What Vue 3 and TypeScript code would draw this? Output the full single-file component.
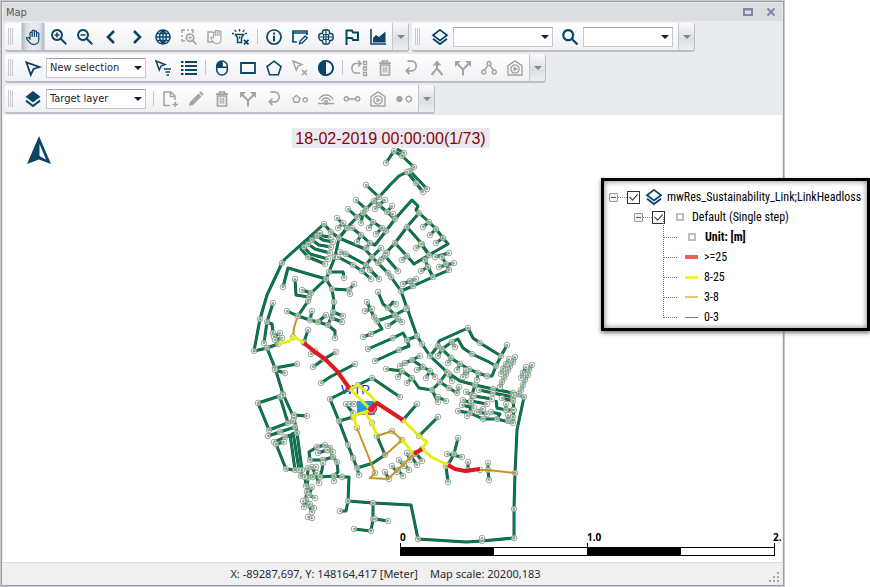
<script setup lang="ts">
import { ref } from 'vue'

interface Shape { d: string; fill?: boolean; w?: number }
interface Tool { icon?: string; label?: string; off?: boolean; active?: boolean; sep?: boolean; select?: string[]; size?: string }
interface Bar { tools: Tool[] }

const house = 'M1 15V5.6L8 .8l7 4.8V15z'
const returnArrow = 'M4.5 1.2H9a4 4.6 0 0 1 0 9.600H3.500M6.500 7.500L3.200 10.800l3.300 3.300'
const layersTop = 'M8 .9L15 6.200 8 11.400 1 6.200z'
const trash: Shape[] = [
  { d: 'M2 3.200H14M5.500 2.500V1H10.500V2.500M3.500 5V15H12.500V5z', w: 1.7 },
  { d: 'M6.200 6.500V12.800M8 6.500V12.800M9.800 6.500V12.800', w: 1 },
]
const split: Shape[] = [
  { d: 'M8 15.500V9.500L2.500 4M8 9.500L13.500 4', w: 2 },
  { d: 'M0 1H6L0 7zM16 1V7L10 1z', fill: true },
]
const houseIcon: Shape[] = [{ d: house, w: 1.4 }, { d: 'M8 4.800a4.200 4.200 0 1 0 .01 0z', w: 1.3 }, { d: 'M6.500 6.500L11 9 6.500 11.500z', fill: true }]

const icons: Record<string, Shape[]> = {
  hand: [{ d: 'M5 10V4.200a1.100 1.100 0 0 1 2.200 0V8V2.300a1.100 1.100 0 0 1 2.200 0V8V2.900a1.100 1.100 0 0 1 2.200 0V8V4.600a1.100 1.100 0 0 1 2.200 0V11a4.500 4.500 0 0 1-4.500 4.300H8c-1.600 0-2.700-.7-3.500-2L1.600 9.600c-.5-1 .8-1.800 1.700-1z', w: 1.2 }],
  zoomIn: [{ d: 'M6 1a5 5 0 1 0 .01 0zM9.800 9.800L15.200 15.200', w: 2 }, { d: 'M3.500 6H8.500M6 3.500V8.500', w: 1.5 }],
  zoomOut: [{ d: 'M6 1a5 5 0 1 0 .01 0zM9.800 9.800L15.200 15.200', w: 2 }, { d: 'M3.500 6H8.500', w: 1.5 }],
  prev: [{ d: 'M11 2L5 8l6 6', w: 2.6 }],
  next: [{ d: 'M5 2l6 6-6 6', w: 2.6 }],
  globe: [{ d: 'M8 1a7 7 0 1 0 .01 0zM8 1V15M1 8H15M2.200 4.500H13.800M2.200 11.500H13.800M8 1C3.500 5 3.500 11 8 15M8 1C12.500 5 12.500 11 8 15', w: 1.4 }],
  zoomBox: [{ d: 'M1 4V1H4M6 1H8M10 1H12V4M1 6V8M1 10V12H4', w: 1.5 }, { d: 'M9 5a3.700 3.700 0 1 0 .01 0zM11.800 11.500L15.500 15.500', w: 1.6 }, { d: 'M7 8.700H11M9 6.700V10.700', w: 1 }],
  panBox: [{ d: 'M6 3H1V13H6', w: 1.5 }, { d: 'M6.500 9V4a.9.9 0 0 1 1.800 0V7V2.200a.9.9 0 0 1 1.900 0V7V2.200a.9.9 0 0 1 1.900 0V7V3a.9.9 0 0 1 1.900 0V10.500a4 4 0 0 1-4 4.300c-2 0-3-.8-3.800-2L3.800 9.500c-.5-1 .8-1.700 1.400-1z', w: 1.1 }],
  torchOff: [{ d: 'M2.500 5.500H10.500L8.500 9V13.500H4.500V9z', w: 1.5 }, { d: 'M6.500 0V2.500M1.500 .8L3.200 2.800M11.500 .8L9.800 2.800M-1 4.500H1M12 4.500H14', w: 1.3 }, { d: 'M6.500 7.500V9.500', w: 1.5 }, { d: 'M11 10.800L15.500 15.300M15.500 10.800L11 15.300', w: 1.8 }],
  info: [{ d: 'M8 1a7 7 0 1 0 .01 0z', w: 1.6 }, { d: 'M7 3.500H9V5.500H7zM7 6.800H9V12.500H7z', fill: true }],
  edit: [{ d: 'M5 13H1V2H15V6M1 4H15', w: 1.7 }, { d: 'M7.500 14.800L8.200 12 13.200 7 15.200 9 10.200 14z', w: 1.4 }],
  flower: [{ d: 'M5.500 5.500H10.500V10.500H5.500zM8 1V15M1 8H15', w: 1.2 }, { d: 'M4.500 5V3a3.500 2.200 0 0 1 7 0V5M11 4.500H13a2.200 3.500 0 0 1 0 7H11M11.500 11V13a3.500 2.200 0 0 1-7 0V11M5 11.500H3a2.200 3.500 0 0 1 0-7H5', w: 1.4 }],
  flag: [{ d: 'M2.500 16V1.500H8L9 3.500H14V11H9L8 9H2.500', w: 2 }],
  chart: [{ d: 'M1 0V15H16', w: 1.6 }, { d: 'M3 13.500V9L6 6 9 8 15.500 2.500V13.500z', fill: true }],
  layers: [{ d: layersTop, w: 1.8 }, { d: 'M1 9.700L8 15 15 9.700', w: 1.8 }],
  layersFull: [{ d: 'M8 0L15.500 5.800 8 11.500 .5 5.800z', fill: true }, { d: 'M1 9.700L8 15 15 9.700', w: 2.100 }],
  search: [{ d: 'M6.200 1.200a5 5 0 1 0 .01 0zM10 10L15.500 15.500', w: 2.300 }],
  cursor: [{ d: 'M1.300 2.300L14.500 7 8.500 9 5.800 14.800z', w: 1.8 }],
  cursorList: [{ d: 'M1 1L10 4.500 6 6 4.300 10z', w: 1.5 }, { d: 'M9 9H16M10.500 12H15M11.500 15H14', w: 1.3 }],
  list: [{ d: 'M0 2H2.500M0 6H2.500M0 10H2.500M0 14H2.500M4 2H16M4 6H16M4 10H16M4 14H16', w: 1.8 }],
  mouse: [{ d: 'M2.700 6a5.300 5 0 0 1 10.600 0V10a5.300 5 0 0 1-10.600 0zM2.700 7.200H13.300M8 1V7', w: 1.5 }, { d: 'M8 1V7H2.700C2.700 3 5 1 8 1z', fill: true }],
  rect: [{ d: 'M1 3H15V13H1z', w: 1.8 }],
  pentagon: [{ d: 'M8 1.200L15 6.500 12.300 14.700H3.700L1 6.500z', w: 1.6 }],
  cursorOff: [{ d: 'M1 1L10 4.500 6 6 4.300 10z', w: 1.4 }, { d: 'M10 10L15 15M15 10L10 15', w: 1.6 }],
  contrast: [{ d: 'M8 1a7 7 0 1 0 .01 0z', w: 1.800 }, { d: 'M8 0a8 8 0 0 0 0 16z', fill: true }],
  route: [{ d: 'M10 3.500H5a4 4 0 0 0-4 4V9a4 4 0 0 0 4 4H9M7 .5l3 3-3 3', w: 1.6 }, { d: 'M12.500 1.500H15.500V4.500H12.500zM12.500 7H15.500V10H12.500zM12.500 12.500H15.500V15.500H12.500z', w: 1.3 }],
  trash,
  back: [{ d: returnArrow, w: 1.7 }],
  merge: [{ d: 'M8 3V8.500L2.500 15M8 8.500L13.500 15', w: 2 }, { d: 'M3.500 5.500L8 .5 12.500 5.500z', fill: true }],
  split,
  network: [{ d: 'M8 1.500a2 2 0 1 0 .01 0zM2.700 10a2 2 0 1 0 .01 0zM13.300 10a2 2 0 1 0 .01 0zM7 5.300L3.700 10M9 5.300L12.300 10', w: 1.5 }],
  house: houseIcon,
  newDoc: [{ d: 'M8 14.500H2V1H9L13 5V9M8.500 1V5.500H13', w: 1.5 }, { d: 'M10.500 13.500H16M13.300 10.800V16', w: 1.5 }],
  pencil: [{ d: 'M1 15L2 11 10.500 2.500 13.500 5.500 5 14z', fill: true }, { d: 'M11.200 1.800L12.800 .3 15.700 3.200 14.200 4.800z', fill: true }],
  shapes: [{ d: 'M4.500 4.500L8 7.200 6.700 11.300H2.300L1 7.200z', w: 1.4 }, { d: 'M13.200 6.700a2.200 2.200 0 1 0 .01 0z', w: 1.400 }],
  weir: [{ d: 'M0 12.500H16M1 8.500C4 2.500 12 2.500 15 8.500M3.500 10C5.500 6 10.500 6 12.500 10M6 11C7 9 9 9 10 11', w: 1.3 }, { d: 'M6.500 11H9.500V14H6.500z', fill: true }],
  link: [{ d: 'M2.300 5.700a2.100 2.100 0 1 0 .01 0zM13.700 5.700a2.100 2.100 0 1 0 .01 0zM4.500 8H11.500', w: 1.500 }],
  points: [{ d: 'M3.400 4.800a3.200 3.200 0 1 0 .01 0z', fill: true }, { d: 'M12.800 5.300a2.700 2.700 0 1 0 .01 0z', w: 1.5 }],
}

const rows: Bar[][] = [
  [
    { tools: [
      { icon: 'hand', label: 'Pan', active: true }, { icon: 'zoomIn', label: 'Zoom in' }, { icon: 'zoomOut', label: 'Zoom out' },
      { icon: 'prev', label: 'Previous extent' }, { icon: 'next', label: 'Next extent' }, { icon: 'globe', label: 'Full extent' },
      { icon: 'zoomBox', label: 'Zoom to selection', off: true }, { icon: 'panBox', label: 'Pan to selection', off: true },
      { icon: 'torchOff', label: 'Clear highlight' }, { sep: true },
      { icon: 'info', label: 'Identify' }, { icon: 'edit', label: 'Edit properties' }, { icon: 'flower', label: 'Connectivity' },
      { icon: 'flag', label: 'Flags' }, { icon: 'chart', label: 'Profile chart' },
    ] },
    { tools: [
      { icon: 'layers', label: 'Layers' }, { select: [''], label: 'Layer' },
      { icon: 'search', label: 'Search', size: 'wide' }, { select: [''], label: 'Search for', size: 'short' },
    ] },
  ],
  [
    { tools: [
      { icon: 'cursor', label: 'Select' }, { select: ['New selection', 'Add to selection'], label: 'Selection mode' },
      { icon: 'cursorList', label: 'Select by attribute' }, { icon: 'list', label: 'Selection list' }, { sep: true },
      { icon: 'mouse', label: 'Click select' }, { icon: 'rect', label: 'Rectangle select' }, { icon: 'pentagon', label: 'Polygon select' },
      { icon: 'cursorOff', label: 'Clear selection', off: true }, { icon: 'contrast', label: 'Invert selection' }, { sep: true },
      { icon: 'route', label: 'Trace', off: true }, { icon: 'trash', label: 'Delete', off: true }, { icon: 'back', label: 'Undo trace', off: true },
      { icon: 'merge', label: 'Merge', off: true }, { icon: 'split', label: 'Split', off: true }, { icon: 'network', label: 'Network', off: true },
      { icon: 'house', label: 'Connections', off: true },
    ] },
  ],
  [
    { tools: [
      { icon: 'layersFull', label: 'Target' }, { select: ['Target layer'], label: 'Target layer' }, { sep: true },
      { icon: 'newDoc', label: 'Create', off: true }, { icon: 'pencil', label: 'Edit', off: true }, { icon: 'trash', label: 'Delete feature', off: true },
      { icon: 'split', label: 'Split feature', off: true }, { icon: 'back', label: 'Undo', off: true }, { icon: 'shapes', label: 'Convert', off: true },
      { icon: 'weir', label: 'Weir', off: true }, { icon: 'link', label: 'Link', off: true }, { icon: 'house', label: 'Service', off: true },
      { icon: 'points', label: 'Points', off: true },
    ] },
  ],
]

// Pipe runs; a point starting with "~" is a bend without a junction.
const pipes: string[] = [
  '386,163 394,151 402,156 414,167 410,171', '~397,149 404,153 402,156', '410,171 427,189', '407,172 416,183 423,192',
  '407,172 ~399,176 ~390,185 379,197', '366,185 379,197 374,201 366,209 363,213 357,217 347,228 339,238', '356,200 366,209',
  '385,200 379,205 374,201', '375,209 379,205 387,212 395,219', '392,206 387,212', '393,214 ~390,215',
  '339,238 347,228 352,228 361,235 370,243 ~375,245 386,231 395,219 ~412,200 ~418,206 ~416,210 419,213',
  '348,209 357,217', '337,218 347,228', '338,228 343,223', '361,223 363,213 373,222 382,228 386,231', '369,228 373,222', '376,234 382,228',
  '357,242 361,235', '366,248 370,243', '419,213 407,227 395,243 386,253 378,263', '419,213 429,222 436,229 443,238 ~448,244 429,255',
  '423,227 429,222', '430,235 436,229', '436,243 443,238', '407,227 422,244 429,255', '416,248 422,244',
  '324,224 ~285,259 282,263 ~267,295 260,319 254,351 267,348', '324,224 331,232 339,238',
  '320,233 ~303,245 ~301,249 308,257 325,264', '320,233 ~323,236 331,237', '317,236 ~323,240 333,242', '312,240 ~319,245 331,247',
  '308,244 ~315,249 330,253', '304,247 ~310,254 328,259',
  '339,238 335,257 329,272 326,279 311,293 308,301 298,316', '339,238 ~365,249 372,257', '340,252 346,254 366,265 379,279',
  '338,257 353,265 362,271 371,279', '362,271 366,265 372,257 381,248', '372,257 378,263 388,273 391,277 401,291 407,308 417,336 422,344 430,356 447,372',
  '387,253 381,260', '329,272 ~343,272 344,278', '283,287 ~288,268 326,279', '295,279 ~296,295 309,297 311,293', '302,290 311,293',
  '326,279 332,289 349,290 354,284', '350,294 349,290', '332,289 334,302 333,312 328,325 ~335,331 335,338', '343,316 333,312',
  '342,322 332,318', '287,311 298,316 310,320 318,322 328,325', '326,315 318,322', '312,311 310,320',
  '273,303 267,322 264,343', '267,322 ~272,324 273,333 278,344 267,348', '280,333 274,337', '282,338 275,340', '308,330 304,342',
  '336,352 324,359 313,367', '311,354 315,351', '355,364 ~330,377 321,383',
  '367,302 374,317 377,321 ~382,329 371,334 363,337', '365,311 372,309', '377,321 395,315 406,309',
  '368,349 393,338 ~403,333 407,340 417,336', '407,340 ~409,346 399,350 375,361', '378,292 ~383,304 388,308 ~393,302 396,304', '388,308 395,315',
  '402,322 398,319 395,315', '398,319 388,326', '385,256 398,271', '370,270 379,279',
  '395,243 407,256 ~414,264 429,255', '402,260 407,256', '421,244 429,255 425,260 428,267 433,277 413,286 401,291', '421,271 428,267',
  '433,277 449,270 446,264 442,257', '435,257 449,253', '439,267 454,263', '403,284 410,281 416,279', '410,281 413,286',
  '430,356 438,346 ~439,341 468,328 ~473,338 480,343 501,356 507,345', '501,356 496,366 ~492,376 487,376 478,373 469,369 460,364 451,358 442,349 438,346',
  '442,349 452,342 ~458,339 ~463,348 472,354 ~489,362 496,366', '455,347 452,342', '438,356 442,349', '448,363 451,358', '457,370 460,364',
  '466,375 469,369', '477,380 478,373', '405,363 412,360 420,356', '412,360 423,367 430,371 435,377', '417,370 423,367', '426,378 430,371', '400,366 405,363',
  '386,369 402,371 412,378 ~419,388 432,390 440,382 447,372', '407,383 412,378', '398,377 402,371', '438,402 432,390', '446,401 438,397',
  '440,382 449,388 457,393 459,387', '452,381 449,374', '463,377 466,370',
  '447,372 ~460,381 475,385 493,389 513,393 524,397 ~517,430 515,473 514,509 514,538 482,541 ~466,542 418,539 ~411,505 373,503 348,501 ~346,511 340,511',
  '482,538 482,541', '348,501 ~349,477 342,477', '373,503 373,519 371,531 354,529', '375,519 388,521',
  '515,357 513,362 510,366 508,370 506,374 504,378 502,382 500,387', '509,359 506,364 503,369 501,374',
  '532,365 529,370 528,375 525,380 523,385 521,390 519,394', '526,367 523,373 521,378',
  '475,385 472,395 471,403 470,413 483,419 497,419 513,423', '463,400 471,403', '458,411 470,413', '462,405 474,408', '487,404 471,401', '492,399 474,396',
  '493,393 479,390', '493,393 513,397', '~496,400 ~497,408 506,410 513,410', '513,401 502,398', '491,412 ~500,414 497,419', '514,395 513,401 514,410 513,417 513,423',
  '466,392 472,395', '467,416 470,413', '479,412 487,414', '506,404 506,410', '508,421 508,415', '483,409 477,412',
  '330,399 ~348,390 358,385 372,378 400,397', '330,399 339,421 348,445 353,458 357,468 359,475', '357,468 ~373,463 385,455 377,436', '339,421 353,417',
  '346,404 353,413', '350,404 354,404', '403,420 417,404', '419,436 438,417', '458,438 454,454 448,465 446,466 448,482', '447,454 462,457',
  '468,462 468,470', '488,463 488,470 489,480', '385,472 389,479', '403,476 398,470', '392,466 397,472', '409,470 404,464', '399,460 404,466', '417,465 411,456', '407,453 410,460', '422,461 416,453',
  '267,348 275,368 283,394 294,418', '297,364 275,368', '285,373 275,370', '258,403 283,395', '258,403 269,430 293,421', '280,397 288,423', '307,416 294,415',
  '294,418 297,433 302,470', '268,436 280,432 295,427', '274,442 285,437 297,433', '284,442 276,444 286,469 295,470 302,470', '~290,434 295,470', '~293,432 299,470',
  '302,470 301,476 313,477 320,477 334,476 342,477', '334,481 334,476', '337,462 ~338,472 334,476', '325,445 317,447 ~309,452 310,460 323,460 333,457 330,448 325,445',
  '333,457 337,462', '323,463 ~322,470 320,477', '312,467 319,483', '~308,467 307,492 304,507', '308,468 316,467', '312,487 309,495 315,498', '306,500 314,508', '308,517 312,518',
  '309,505 312,512', '303,501 310,504', '317,473 308,478', '328,450 333,452', '318,453 327,450', '305,477 306,486',
]
const thick: { kind: string; pts: string }[] = [
  { kind: 'orange', pts: '297,318 294,328 293,337' }, { kind: 'yellow', pts: '278,344 290,341 293,336 304,343' },
  { kind: 'red', pts: '304,343 315,352 325,359 337,371 350,389' },
  { kind: 'yellow', pts: '350,389 371,410' }, { kind: 'yellow', pts: '350,389 358,385 370,395 377,403' },
  { kind: 'yellow', pts: '371,410 353,416 357,428' }, { kind: 'yellow', pts: '365,412 372,423 377,436' },
  { kind: 'red', pts: '371,410 377,403 403,420' }, { kind: 'yellow', pts: '403,420 419,436 427,442 422,449' },
  { kind: 'yellow', pts: '422,449 433,458 448,465' }, { kind: 'red', pts: '448,465 455,469 465,471 480,469' },
  { kind: 'orange', pts: '480,470 488,470 515,473' }, { kind: 'orange', pts: '357,428 375,473 370,478 388,479 414,454' },
  { kind: 'orange', pts: '377,436 392,431 402,440 384,456' }, { kind: 'yellow', pts: '402,440 414,454' }, { kind: 'red', pts: '414,454 422,449' },
]
const extraNodes = '293,337 357,428 375,473 392,431 402,440 414,454 422,449 372,423 480,470 358,385 304,343 350,389'

const lines = pipes.map((p) => p.split('~').join(''))
const seen = new Set<string>()
for (const run of [...pipes, extraNodes]) for (const p of run.split(' ')) if (!p.startsWith('~')) seen.add(p)
const nodes = [...seen].map((p) => { const [x, y] = p.split(',').map(Number); return { x, y } })

const classes = [
  { kind: 'red', text: '>=25' }, { kind: 'yellow', text: '8-25' }, { kind: 'orange', text: '3-8' }, { kind: 'green', text: '0-3' },
]
const showLayer = ref(true)
const showStep = ref(true)
</script>

<template>
  <div class="page">
    <main class="window">
      <header class="title">
        <span>Map</span>
        <div class="winbtns">
          <button type="button" aria-label="Maximize"><svg viewBox="0 0 10 8" width="10" height="8"><path d="M1 1H9V7H1zM1 1.500H9" /></svg></button>
          <button type="button" aria-label="Close"><svg viewBox="0 0 10 8" width="10" height="8"><path d="M1.500 .5L8.500 7.500M8.500 .5L1.500 7.500" /></svg></button>
        </div>
      </header>
      <div class="bars">
        <div v-for="(row, r) in rows" :key="r" class="barrow">
          <div v-for="(bar, b) in row" :key="b" class="bar" role="toolbar">
            <span class="grip"></span>
            <template v-for="(t, i) in bar.tools" :key="i">
              <span v-if="t.sep" class="sep"></span>
              <label v-else-if="t.select" class="combo" :class="t.size">
                <select :aria-label="t.label"><option v-for="o in t.select" :key="o">{{ o }}</option></select>
                <svg viewBox="0 0 8 4" width="8" height="4"><path d="M0 0H8L4 4z" /></svg>
              </label>
              <button v-else type="button" class="tool" :class="[{ active: t.active, off: t.off }, t.size]" :aria-label="t.label" :disabled="t.off">
                <svg viewBox="0 0 16 16" width="16" height="16">
                  <path v-for="(s, k) in icons[t.icon!]" :key="k" :d="s.d" :class="s.fill ? 'solid' : 'line'" :stroke-width="s.w" />
                </svg>
              </button>
            </template>
            <button type="button" class="more" aria-label="Toolbar options"><svg viewBox="0 0 8 4" width="8" height="4"><path d="M0 0H8L4 4z" /></svg></button>
          </div>
        </div>
      </div>
      <section class="map">
        <svg class="canvas" viewBox="3 115 779 447" preserveAspectRatio="xMidYMid meet">
          <text x="341" y="394" class="wtp">WTP</text>
          <g class="pipe edge"><polyline v-for="(p, i) in lines" :key="i" :points="p" /></g>
          <g class="pipe core"><polyline v-for="(p, i) in lines" :key="i" :points="p" /></g>
          <rect x="357" y="401" width="18" height="14" class="tank" />
          <path d="M368 414a6 6 0 1 0 5-11z" class="pump" />
          <g class="nodes"><circle v-for="(n, i) in nodes" :key="i" :cx="n.x" :cy="n.y" r="2.800" /></g>
          <g class="dots"><circle v-for="(n, i) in nodes" :key="i" :cx="n.x" :cy="n.y" r="0.900" /></g>
          <g class="heavy"><polyline v-for="(t, i) in thick" :key="i" :points="t.pts" :class="t.kind" /></g>
          <circle cx="371" cy="409" r="3" class="pumpdot" />
          <g class="scale">
            <rect x="400.5" y="547.5" width="374" height="8" class="track" />
            <rect x="400" y="547" width="94" height="9" />
            <rect x="587" y="547" width="94" height="9" />
            <path d="M400.500 543V556M587.500 543V556M774.500 543V556" />
            <text x="400" y="541">0</text>
            <text x="587" y="541">1.0</text>
            <text x="773" y="541">2.</text>
          </g>
        </svg>
        <svg class="north" viewBox="0 0 24 28" width="24" height="28">
          <path d="M12 0L24 28 12 23.500 0 28z" /><path d="M12.500 8L19 23.500 12.500 20z" class="hole" />
        </svg>
        <div class="stamp">18-02-2019 00:00:00(1/73)</div>
      </section>
      <footer class="status">
        <p><span>X: -89287,697, Y: 148164,417 [Meter]</span><span>Map scale: 20200,183</span></p>
        <svg class="resize" viewBox="0 0 12 12" width="12" height="12"><path d="M9 1h2v2h-2zM9 5h2v2h-2zM9 9h2v2h-2zM5 5h2v2h-2zM5 9h2v2h-2zM1 9h2v2h-2z" /></svg>
      </footer>
    </main>

    <aside class="legend">
      <div class="node top">
        <button type="button" class="fold" aria-label="Collapse layer"></button><span class="dash"></span>
        <label><input v-model="showLayer" type="checkbox" />
          <svg class="mark" viewBox="0 0 16 16" width="16" height="16"><path v-for="(s, k) in icons.layers" :key="k" :d="s.d" class="line" :stroke-width="s.w" /></svg>
          <span>mwRes_Sustainability_Link;LinkHeadloss</span></label>
      </div>
      <div class="node sub">
        <button type="button" class="fold" aria-label="Collapse step"></button><span class="dash"></span>
        <label><input v-model="showStep" type="checkbox" /><i class="box"></i><span>Default (Single step)</span></label>
      </div>
      <ul>
        <li><i class="box"></i><b>Unit: [m]</b></li>
        <li v-for="c in classes" :key="c.text"><i class="swatch" :class="c.kind"></i><span>{{ c.text }}</span></li>
      </ul>
    </aside>
  </div>
</template>

<style>
body { margin: 0; background: #fff; }
</style>

<style scoped>
* { box-sizing: border-box; }
.page { position: relative; min-height: 100vh; padding-right: 85px; display: flex; font-family: "DejaVu Sans Condensed", "DejaVu Sans", sans-serif; font-size: 11px; color: #1d1d30; }
button { font: inherit; border: 0; padding: 0; background: none; display: flex; align-items: center; justify-content: center; }
.window { flex: 1; min-width: 0; display: flex; flex-direction: column; background: #eaebef; border: 1px solid #c5c7cd; outline: 1px solid #9b9da8; outline-offset: -2px; padding: 2px; }
.title { display: flex; justify-content: space-between; align-items: center; height: 18px; padding: 0 6px 0 3px; background: #dcdde1; color: #555764; }
.winbtns { display: flex; gap: 13px; }
.winbtns path { fill: none; stroke: #8485a0; stroke-width: 2; }
.bars { display: flex; flex-direction: column; gap: 2px; padding: 2px 2px 1px; }
.barrow { display: flex; gap: 3px; }
.bar { display: flex; align-items: center; height: 29px; background: linear-gradient(#fff, #f0f1f5); border-bottom: 2px solid #bbbdc5; border-right: 1px solid #bbbdc5; border-radius: 3px; overflow: hidden; }
.grip { width: 5px; height: 17px; margin: 0 7px 0 3px; border: solid #c9cad1; border-width: 0 1px; background: linear-gradient(90deg, transparent 1px, #c9cad1 1px, #c9cad1 2px, transparent 2px); }
.tool { width: 26px; height: 27px; color: #0b4669; }
.tool.off { color: #a3a3a3; }
.tool.active { background: linear-gradient(90deg, transparent 1px, #b4b7c4 2px, #dfe1e8 7px, #e9ebf1 13px, #dfe1e8 20px, #b4b7c4 24px, transparent 25px); }
.tool.wide { width: 30px; padding-left: 3px; }
.tool svg, .mark { overflow: visible; }
.line { fill: none; stroke: currentColor; }
.solid { fill: currentColor; }
.sep { width: 1px; height: 15px; margin: 0 3px; background: #c4c5cc; }
.combo { position: relative; display: flex; width: 100px; margin-right: 4px; }
.combo:not(.short):has(+ .wide) { margin-right: 0; }
.combo.short { width: 90px; margin-right: 5px; }
.combo select { appearance: none; width: 100%; height: 20px; padding: 0 16px 0 3px; font: inherit; color: inherit; background: #fff; border: 1px solid #c6c7ce; border-top-color: #9fa0ab; border-radius: 0; }
.combo svg { position: absolute; right: 4px; top: 8px; pointer-events: none; fill: #1d1d35; }
.more { width: 16px; height: 27px; margin-left: 1px; border-left: 1px solid #c3c5cd; background: linear-gradient(#fafafc, #dcdee5 60%, #eceef2); }
.combo.short + .more { margin-left: 0; }
.more svg { fill: #85869a; }
.map { position: relative; flex: 1; display: flex; background: #fff; overflow: hidden; }
.canvas { display: block; width: 100%; height: 100%; }
.pipe, .heavy { fill: none; stroke-linejoin: round; }
.edge { stroke: #2c4a4c; stroke-width: 3; }
.core { stroke: #007d48; stroke-width: 2; }
.heavy polyline { stroke-width: 3; }
.heavy .red { stroke: #dd1a20; stroke-width: 4; }
.heavy .yellow { stroke: #e6ee16; }
.heavy .orange { stroke: #c8961e; stroke-width: 2; }
.tank { fill: #1e9ee0; }
.pump { fill: #a78fb5; stroke: #dd1a20; stroke-width: 1; }
.pumpdot { fill: #e51f28; }
.wtp { font: 13px "Liberation Sans", sans-serif; fill: #2020ff; }
.nodes { fill: #fff; fill-opacity: .6; stroke: #8c8c8c; stroke-width: .8; }
.dots { fill: #58ad45; }
.scale { font: bold 10px "Open Sans", sans-serif; stroke: none; }
.scale .track { fill: #fff; stroke: #000; }
.scale path { stroke: #000; }
.north { position: absolute; left: 24px; top: 21px; fill: #0b4669; }
.north .hole { fill: #fff; }
.stamp { position: absolute; top: 13px; left: 50%; transform: translateX(-50%); margin-left: -2px; padding: 2px 4px 0; background: #e9eaef; color: #8b0008; font: 16px/18px "Liberation Sans", sans-serif; white-space: nowrap; }
.status { display: flex; align-items: flex-end; height: 22px; background: #f0f0f0; border-top: 1px solid #dcdcdc; font: 11px/20px "Noto Sans", sans-serif; color: #2a2a3a; }
.status p { flex: 1; margin: 0; display: flex; justify-content: center; gap: 12px; white-space: nowrap; }
.resize { margin: 0 2px 1px 0; fill: #a6a6a6; }
.legend { position: absolute; right: 0; top: 178px; width: 269px; padding: 6px 0 1px 5px; background: #fff; border: 3px solid #000; box-shadow: inset 0 0 5px 1px #999, 0 2px 4px #777; font: 12px/20px "Roboto Condensed", Roboto, "Liberation Sans", sans-serif; color: #000; white-space: nowrap; }
.node, .node label { display: flex; align-items: center; flex-shrink: 0; height: 20px; }
.sub { padding-left: 25px; }
.fold { flex: none; width: 9px; height: 9px; border: 1px solid #989898; border-radius: 1px; background: linear-gradient(#3c5aa8, #3c5aa8) center / 5px 1px no-repeat #f2f2f2; }
.dash { flex: none; width: 9px; border-top: 1px dotted #777; }
.node input { appearance: none; position: relative; width: 13px; height: 13px; margin: 0; border: 1px solid #333; background: #fff; }
.node input:checked::after { content: ""; position: absolute; left: 3px; top: 0; width: 4px; height: 7px; border: solid #333; border-width: 0 1px 1px 0; transform: rotate(42deg); }
.mark { margin: 0 5px 0 6px; color: #0b4669; }
.box { width: 8px; height: 8px; border: 2px solid #bdbdbd; }
.sub .box { margin: 0 8px 0 11px; }
ul { list-style: none; margin: 0 0 0 54px; padding: 0; }
li { position: relative; display: flex; align-items: center; height: 20px; padding-left: 22px; }
li::before { content: ""; position: absolute; left: 0; top: -10px; width: 13px; height: 20px; border: dotted #777; border-width: 0 0 1px 1px; }
li .box { margin: 0 9px 0 3px; }
.swatch { width: 13px; margin-right: 6px; }
.swatch.red { height: 4px; background: #f65b55; }
.swatch.yellow { height: 3px; background: #f4f04a; }
.swatch.orange { height: 2px; background: #f6be63; }
.swatch.green { height: 1px; background: #4fa050; }
</style>
